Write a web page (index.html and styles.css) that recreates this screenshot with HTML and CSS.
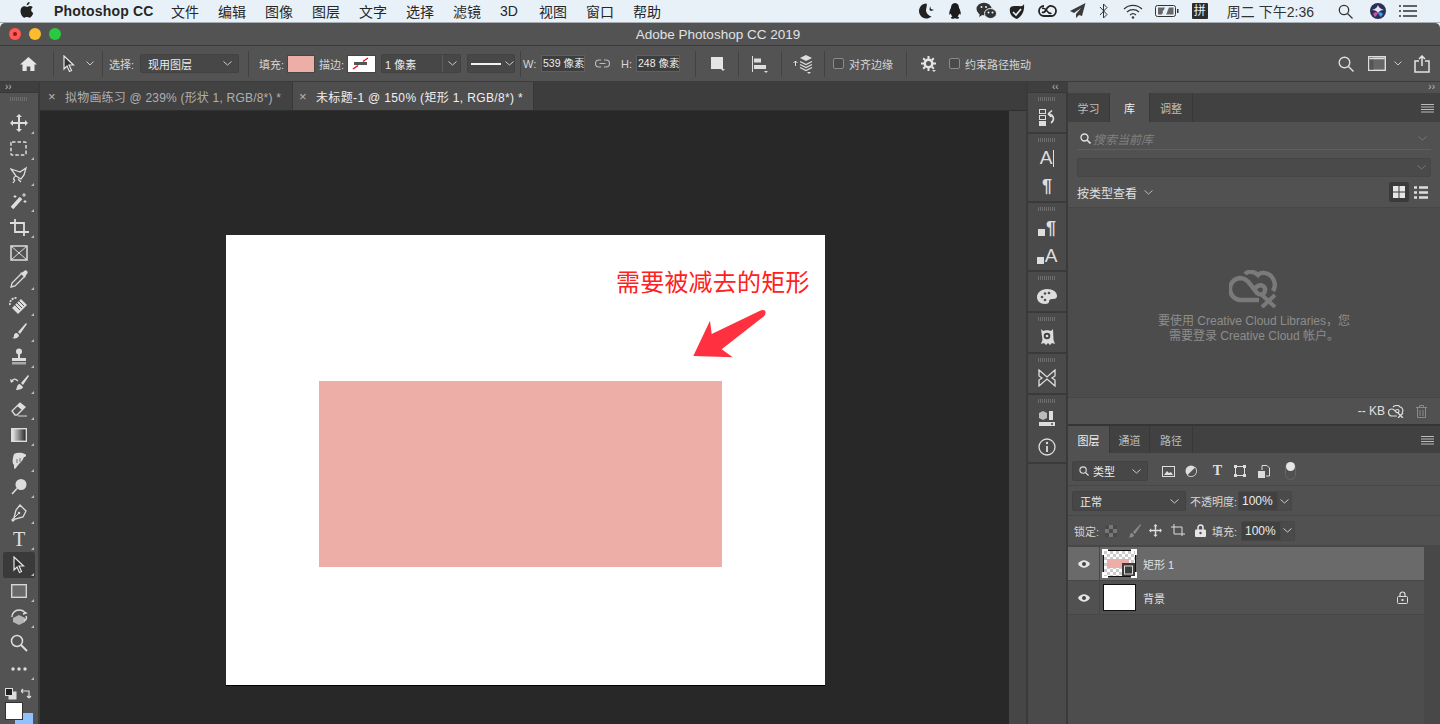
FILE: index.html
```html
<!DOCTYPE html>
<html lang="zh-CN">
<head>
    <meta charset="UTF-8">
    <title>Adobe Photoshop CC 2019</title>
    <link rel="stylesheet" href="styles.css">
</head>
<body>
    <svg class="defs" width="0" height="0">
        <defs>
            <linearGradient id="grad" x1="0" y1="0" x2="1" y2="0">
                <stop offset="0" stop-color="#f0f0f0"/>
                <stop offset="1" stop-color="#222"/>
            </linearGradient>
            <pattern id="check" width="6" height="6" patternUnits="userSpaceOnUse">
                <rect width="6" height="6" fill="#fff"/>
                <rect width="3" height="3" fill="#ccc"/>
                <rect x="3" y="3" width="3" height="3" fill="#ccc"/>
            </pattern>
        </defs>
    </svg>

    <div class="menubar">
        <svg class="apple" width="14" height="16" viewBox="0 0 14 16"><path d="M9.600 0c.1 1.700-1.200 3.200-2.900 3.200C6.600 1.600 8 .2 9.600 0zM12.800 5.300c-1 .6-1.600 1.500-1.600 2.700 0 1.400.8 2.400 2.100 2.900-.8 2.300-2.300 4.800-3.900 4.800-.9 0-1.400-.6-2.500-.6s-1.700.6-2.500.6C2.500 15.700.5 12 .5 9c0-3 1.900-4.800 3.800-4.800 1.100 0 2 .7 2.700.7.700 0 1.700-.8 3-.8 1.100 0 2.100.4 2.800 1.200z" fill="#222"/></svg>
        <span class="menu-app">Photoshop CC</span>
        <span class="menu-item">文件</span>
        <span class="menu-item">编辑</span>
        <span class="menu-item">图像</span>
        <span class="menu-item">图层</span>
        <span class="menu-item">文字</span>
        <span class="menu-item">选择</span>
        <span class="menu-item">滤镜</span>
        <span class="menu-item menu-3d">3D</span>
        <span class="menu-item">视图</span>
        <span class="menu-item">窗口</span>
        <span class="menu-item">帮助</span>
        <div class="status">
            <svg class="st st-moon" width="17" height="16" viewBox="0 0 17 16"><path d="M8.500 .5a7.500 7.500 0 1 0 5 13.100A8 8 0 0 1 8 8c0-3 1.500-6 .5-7.500z" fill="#222"/><path d="M12 3l1 3 3 1-3 1-1.500-1z" fill="#222"/></svg>
            <svg class="st st-qq" width="14" height="18" viewBox="0 0 14 18"><path d="M7 1c2.800 0 4 2.200 4 4.800 1.200 2.400 2.200 5 1.600 6.800-.5.200-1.100-.6-1.500-1.200-.2 1.200-.8 2.300-1.600 3 1 .4 1.600 1 1.600 1.500 0 .8-3 1-4.100.4-1.100.6-4.100.4-4.100-.4 0-.5.600-1.100 1.600-1.500-.8-.7-1.400-1.800-1.600-3-.4.600-1 1.400-1.500 1.200C.8 10.800 1.800 8.200 3 5.800 3 3.200 4.200 1 7 1z" fill="#1c1c1c"/></svg>
            <svg class="st st-wechat" width="21" height="18" viewBox="0 0 21 18"><ellipse cx="8" cy="7" rx="7.500" ry="6.300" fill="#333"/><path d="M4 11l-1 4 4-2.500z" fill="#333"/><ellipse cx="14.500" cy="11.500" rx="6" ry="5" fill="#333" stroke="#e8f1f8"/><circle cx="12.500" cy="10.500" r="1" fill="#e8f1f8"/><circle cx="16.500" cy="10.500" r="1" fill="#e8f1f8"/><circle cx="5.500" cy="5" r="1" fill="#e8f1f8"/><circle cx="10" cy="5" r="1" fill="#e8f1f8"/></svg>
            <svg class="st st-acorn" width="16" height="17" viewBox="0 0 16 17"><path d="M8 3c3 0 6 1 7-2 .5 5-.5 11-7 15C3 14 0 11 1 5c1-2 4-2 7-2z" fill="#222"/><path d="M4 9l3 3 5-6" stroke="#e8f1f8" stroke-width="1.600" fill="none"/></svg>
            <svg class="st st-cc" width="19" height="14" viewBox="0 0 19 14"><path d="M6 2a5 5 0 0 0 0 10h7a5 5 0 0 0 1-9.900C11 1 9 4 8 6c-1 2-2.500 3-4 2" fill="none" stroke="#222" stroke-width="1.800"/><path d="M4 4.500c2-1 3.500.5 5 2.500 1.500 2 3 3 4.500 2" fill="none" stroke="#222" stroke-width="1.500"/></svg>
            <svg class="st st-send" width="17" height="16" viewBox="0 0 17 16"><path d="M16.500 0L1 8l4 2 7-5-5 6v4l3-3 3 1z" fill="#3a3a3a"/></svg>
            <svg class="st st-bt" width="9" height="16" viewBox="0 0 9 16"><path d="M1 4l7 7.500L4.500 15V1L8 4.500 1 12" fill="none" stroke="#333" stroke-width="1"/></svg>
            <svg class="st st-wifi" width="20" height="15" viewBox="0 0 20 15"><path d="M1 5a13 13 0 0 1 18 0M4 8a9 9 0 0 1 12 0M7 11a4.500 4.500 0 0 1 6 0" fill="none" stroke="#333" stroke-width="1.200"/><circle cx="10" cy="13.500" r="1.200" fill="#333"/></svg>
            <svg class="st st-batt" width="24" height="12" viewBox="0 0 24 12"><rect x=".5" y=".5" width="20" height="11" rx="2" fill="none" stroke="#333"/><rect x="22" y="4" width="1.500" height="4" fill="#333"/><path d="M3 2.500h7l-3 7H3zM14 2.500h4.500v7H11z" fill="#666"/><path d="M12.500 1L8.500 6.500h3L9.500 11" fill="none" stroke="#e8f1f8" stroke-width="1.200"/></svg>
            <span class="st-ime">拼</span>
            <span class="st-clock">周二 下午2:36</span>
            <svg class="st st-find" width="15" height="15" viewBox="0 0 15 15"><circle cx="6" cy="6" r="4.700" fill="none" stroke="#333" stroke-width="1.300"/><path d="M9.500 9.500l5 5" stroke="#333" stroke-width="1.300"/></svg>
            <svg class="st st-siri" width="16" height="16" viewBox="0 0 16 16"><circle cx="8" cy="8" r="8" fill="#2b2f55"/><path d="M8 2c1 3 3 4 6 5-3 0-5 1-6 3C7 8 5 7 2 7c3-1 5-2 6-5z" fill="#e8e0f8"/><path d="M3 11c2-2 3-2 5-1-1 2-2 3-3 4z" fill="#d24fb4"/><path d="M13 11c-2-2-3-2-5-1 1 2 2 3 3 4z" fill="#3aa0e8"/></svg>
            <svg class="st st-list" width="18" height="12" viewBox="0 0 18 12"><path d="M0 1h2M0 6h2M0 11h2M4 1h14M4 6h14M4 11h14" stroke="#333" stroke-width="1.300"/></svg>
        </div>
    </div>

    <div class="window">
        <div class="titlebar">
            <div class="lights">
                <span class="light light-red"></span>
                <span class="light light-yellow"></span>
                <span class="light light-green"></span>
            </div>
            <span class="title">Adobe Photoshop CC 2019</span>
        </div>

        <div class="options">
            <div class="opt-home">
                <svg width="17" height="16" viewBox="0 0 17 16"><path d="M8.500 1L0 8.500h2.500V15h4.200v-4.500h3.600V15h4.200V8.500H17z" fill="#e6e6e6"/></svg>
            </div>
            <i class="sep"></i>
            <div class="opt-tool">
                <svg width="14" height="18" viewBox="0 0 14 18"><path d="M2 1v13l3-3 2.500 5.500 2-1L7 10h4.500z" fill="#333" stroke="#e6e6e6" stroke-width="1.200"/></svg>
                <svg class="opt-tool-chev" width="8" height="5" viewBox="0 0 8 5"><path d="M.5.500L4 4 7.500.5" fill="none" stroke="#ccc"/></svg>
            </div>
            <i class="sep"></i>
            <span class="lbl lbl-select">选择:</span>
            <div class="field field-layer"><span>现用图层</span><svg width="9" height="5" viewBox="0 0 9 5"><path d="M.5.500L4.500 4 8.500.5" fill="none" stroke="#ccc"/></svg></div>
            <i class="sep sep-paint"></i>
            <span class="lbl lbl-fill">填充:</span>
            <span class="swatch swatch-fill"></span>
            <span class="lbl lbl-stroke">描边:</span>
            <span class="swatch swatch-stroke">
                <svg width="25" height="15" viewBox="0 0 25 15"><path d="M6 7.500h13" stroke="#555" stroke-width="3"/><path d="M5 13l5-3.500M15 5.500L20 2" stroke="#e01020" stroke-width="1.500"/></svg>
            </span>
            <div class="field field-size"><span>1 像素</span><b class="field-split"></b><svg width="9" height="5" viewBox="0 0 9 5"><path d="M.5.500L4.500 4 8.500.5" fill="none" stroke="#ccc"/></svg></div>
            <div class="field field-line"><b class="line-sample"></b><svg width="9" height="5" viewBox="0 0 9 5"><path d="M.5.500L4.500 4 8.500.5" fill="none" stroke="#ccc"/></svg></div>
            <i class="sep sep-w"></i>
            <span class="lbl lbl-w">W:</span>
            <div class="num num-w">539 像素</div>
            <svg class="opt-link" width="15" height="9" viewBox="0 0 15 9"><path d="M6 1H4a3.500 3.500 0 0 0 0 7h2M9 1h2a3.500 3.500 0 0 1 0 7H9M4.500 4.500h6" fill="none" stroke="#bbb" stroke-width="1.100"/></svg>
            <span class="lbl lbl-h">H:</span>
            <div class="num num-h">248 像素</div>
            <i class="sep sep-rect"></i>
            <div class="opt-ico opt-rect"><svg width="13" height="13" viewBox="0 0 13 13"><rect width="12" height="12" fill="#e4e4e4"/></svg></div>
            <i class="sep"></i>
            <div class="opt-ico opt-align"><svg width="16" height="16" viewBox="0 0 16 16"><path d="M.5 0v16" stroke="#ddd"/><rect x="2" y="2.500" width="7" height="4" fill="#ddd"/><rect x="2" y="9" width="12" height="4" fill="#ddd"/></svg></div>
            <i class="sep"></i>
            <div class="opt-ico opt-stack"><svg width="20" height="18" viewBox="0 0 20 18"><path d="M2.500 11V6M.5 8l2-2 2 2" fill="none" stroke="#ddd"/><path d="M13 0l6 3-6 3-6-3z" fill="#ddd"/><path d="M7 6.500l6 3 6-3M7 9.500l6 3 6-3M7 12.500l6 3 6-3" fill="none" stroke="#ddd" stroke-width="1.300"/></svg></div>
            <i class="sep"></i>
            <span class="check check-a"></span>
            <span class="lbl lbl-check">对齐边缘</span>
            <i class="sep sep-gear"></i>
            <div class="opt-ico opt-gear"><svg width="15" height="15" viewBox="0 0 15 15"><circle cx="7.500" cy="7.500" r="3.800" fill="none" stroke="#e4e4e4" stroke-width="2.600"/><path d="M7.500 0v3M7.500 12v3M0 7.500h3M12 7.500h3M2.200 2.200l2 2M10.800 10.800l2 2M2.200 12.800l2-2M10.800 4.200l2-2" stroke="#e4e4e4" stroke-width="2"/></svg></div>
            <span class="check check-b"></span>
            <span class="lbl lbl-check">约束路径拖动</span>
            <div class="opt-right">
                <svg width="16" height="16" viewBox="0 0 16 16"><circle cx="6.500" cy="6.500" r="5.300" fill="none" stroke="#ddd" stroke-width="1.400"/><path d="M10.500 10.500l5 5" stroke="#ddd" stroke-width="1.500"/></svg>
                <svg class="opt-layout" width="18" height="15" viewBox="0 0 18 15"><rect x=".7" y=".7" width="16.600" height="13.600" fill="#666" stroke="#ddd" stroke-width="1.400"/><rect x="1.400" y="1.400" width="4" height="12.200" fill="#555"/><path d="M1.400 2.500h15.200" stroke="#ddd" stroke-width="1.500"/></svg>
                <svg class="opt-layout-chev" width="8" height="5" viewBox="0 0 8 5"><path d="M.5.500L4 4 7.500.5" fill="none" stroke="#ccc"/></svg>
                <svg class="opt-share" width="16" height="18" viewBox="0 0 16 18"><path d="M5 6H1v11h14V6h-4M8 11V1M5 4l3-3 3 3" fill="none" stroke="#e4e4e4" stroke-width="1.500"/></svg>
            </div>
        </div>

        <div class="workspace">
            <div class="toolbar">
                <div class="strip strip-left">››</div>
                <div class="grip"></div>
                <div class="tool corner"><svg width="18" height="18" viewBox="0 0 18 18"><path d="M9 0l3 3h-2v5h5V6l3 3-3 3v-2h-5v5h2l-3 3-3-3h2v-5H3v2L0 9l3-3v2h5V3H6z" fill="#ddd"/></svg></div>
                <div class="tool corner"><svg width="18" height="16" viewBox="0 0 18 16"><rect x="1" y="1" width="15" height="13" rx="1" fill="none" stroke="#ddd" stroke-width="1.500" stroke-dasharray="3.500 2"/></svg></div>
                <div class="tool corner"><svg width="18" height="18" viewBox="0 0 18 18"><path d="M1 3l6 2 3 1 6-4-2 7-3 4-5-3zM6 10c-3 1-3 4-1 4M5 14l-2 3M8 13l3 3" fill="none" stroke="#ddd" stroke-width="1.300"/></svg></div>
                <div class="tool corner"><svg width="18" height="18" viewBox="0 0 18 18"><path d="M2 16L11 6" stroke="#ddd" stroke-width="3.500"/><path d="M14 1v4M12 3h4M5 3v3M3.500 4.500h3M15 8v3M13.500 9.500h3" stroke="#ddd" stroke-width="1"/></svg></div>
                <div class="tool corner"><svg width="19" height="19" viewBox="0 0 19 19"><path d="M0 4h14v13M5 0v13h14" fill="none" stroke="#ddd" stroke-width="1.800" transform="translate(0 1)"/></svg></div>
                <div class="tool"><svg width="18" height="16" viewBox="0 0 18 16"><rect x="1" y="1" width="16" height="14" fill="none" stroke="#ddd" stroke-width="1.500"/><path d="M1 1l16 14M17 1L1 15" stroke="#ddd"/></svg></div>
                <div class="tool corner"><svg width="18" height="18" viewBox="0 0 18 18"><path d="M11 4L2 13l-1 4 4-1 9-9" fill="none" stroke="#ddd" stroke-width="1.300"/><path d="M10 3l5 5 1-3c2-2 2-3 1-4s-2-1-4 1z" fill="#ddd"/></svg></div>
                <div class="tool corner"><svg width="20" height="19" viewBox="0 0 20 19"><path d="M3 12l9-9 6 6-9 9z" fill="#ddd"/><path d="M8 7l5 5M10 5l5 5M6 9l5 5" stroke="#555"/><path d="M1 9a6 6 0 0 1 7-7" fill="none" stroke="#ddd" stroke-width="1.800" stroke-dasharray="2 1"/></svg></div>
                <div class="tool corner"><svg width="18" height="18" viewBox="0 0 18 18"><path d="M16 1L8 10l2 2 7-10z" fill="#ddd"/><path d="M7 11c-3 0-3 2-3 3s-1 2-2 2c3 1 7 0 7-3z" fill="#ddd"/></svg></div>
                <div class="tool corner"><svg width="18" height="18" viewBox="0 0 18 18"><circle cx="9" cy="3.500" r="3" fill="#ddd"/><path d="M8 6h2v4h6v3H2v-3h6z" fill="#ddd"/><rect x="2" y="14" width="14" height="2.500" fill="#aaa"/></svg></div>
                <div class="tool corner"><svg width="20" height="18" viewBox="0 0 20 18"><path d="M19 1L12 9l2 2 6-9zM11 10c-2 0-3 2-3 3l-1 3c3 0 7-1 7-3z" fill="#ddd"/><path d="M9 7C6 4 4 5 3 7" fill="none" stroke="#ddd" stroke-width="1.300"/><path d="M1 5l1 4 3-2z" fill="#ddd"/></svg></div>
                <div class="tool corner"><svg width="18" height="16" viewBox="0 0 18 16"><path d="M2 10l8-8 5 4-8 8H5z" fill="none" stroke="#ddd" stroke-width="1.300"/><path d="M7 5l3-3 5 4-3 3z" fill="#ddd"/><path d="M8 15h9" stroke="#ddd"/></svg></div>
                <div class="tool corner"><svg width="16" height="14" viewBox="0 0 16 14"><rect x=".7" y=".7" width="14.600" height="12.600" fill="url(#grad)" stroke="#ddd" stroke-width="1.400"/></svg></div>
                <div class="tool corner"><svg width="18" height="18" viewBox="0 0 18 18"><path d="M4 2c4-2 8-1 11 0 2 1 1 3-1 3-1 3-3 5-5 7l-4 5c-1 0-1-1-1-3 0-1 0-2-1-2-1-3 0-7 1-10z" fill="#ddd"/><path d="M7 7v4M10 6v4" stroke="#555" stroke-width=".8"/></svg></div>
                <div class="tool corner"><svg width="18" height="18" viewBox="0 0 18 18"><circle cx="11" cy="6.500" r="5.500" fill="#ddd"/><path d="M7 10.500L2 16" stroke="#ddd" stroke-width="1.600"/></svg></div>
                <div class="tool corner"><svg width="18" height="18" viewBox="0 0 18 18"><path d="M10 1l6 6-3 6-8 2-2 2-1-1 2-2 2-8z" fill="none" stroke="#ddd" stroke-width="1.300"/><path d="M4 14l4-4" stroke="#ddd"/><circle cx="9" cy="9" r="1.200" fill="#ddd"/></svg></div>
                <div class="tool corner"><span class="tool-t">T</span></div>
                <div class="tool tool-on corner"><svg width="14" height="18" viewBox="0 0 14 18"><path d="M2 1v13l3-3 2.500 5.500 2-1L7 10h4.500z" fill="#2e2e2e" stroke="#e6e6e6" stroke-width="1.200"/></svg></div>
                <div class="tool corner"><svg width="16" height="14" viewBox="0 0 16 14"><rect x=".7" y=".7" width="14.600" height="12.600" fill="#6a6a6a" stroke="#ddd" stroke-width="1.300"/></svg></div>
                <div class="tool corner"><svg width="18" height="18" viewBox="0 0 18 18"><path d="M3 10l6-3 6 3v4l-6 3-6-3z" fill="#b5b5b5"/><path d="M2 9c0-4 3-7 7-7 3 0 5 1 6 3M16 8c1 2 0 4-2 5M13 3l3 2-3 1" fill="none" stroke="#ddd" stroke-width="1.500"/></svg></div>
                <div class="tool"><svg width="18" height="18" viewBox="0 0 18 18"><circle cx="7" cy="7" r="5.500" fill="none" stroke="#ddd" stroke-width="1.500"/><path d="M11 11l6 6" stroke="#ddd" stroke-width="2"/></svg></div>
                <div class="tool corner"><svg width="16" height="4" viewBox="0 0 16 4"><circle cx="2" cy="2" r="1.700" fill="#ddd"/><circle cx="8" cy="2" r="1.700" fill="#ddd"/><circle cx="14" cy="2" r="1.700" fill="#ddd"/></svg></div>
                <div class="tool-mini">
                    <svg width="12" height="12" viewBox="0 0 12 12"><rect x="3.500" y="3.500" width="8" height="8" fill="#ddd"/><rect x=".5" y=".5" width="7" height="7" fill="#222" stroke="#ddd"/></svg>
                    <svg width="12" height="12" viewBox="0 0 12 12"><path d="M0 3h8v7M8 10l-2-2M8 10l2-2M0 3l2-2M0 3l2 2" fill="none" stroke="#ddd" stroke-width="1.200"/></svg>
                </div>
                <div class="colors">
                    <span class="color-bg"></span>
                    <span class="color-fg"></span>
                </div>
            </div>

            <div class="docs">
                <div class="tabs">
                    <div class="tab"><span class="tab-x">×</span>拟物画练习 @ 239% (形状 1, RGB/8*) *</div>
                    <div class="tab tab-on"><span class="tab-x">×</span>未标题-1 @ 150% (矩形 1, RGB/8*) *</div>
                </div>
                <div class="doc-row">
                    <div class="canvas">
                        <div class="paper">
                            <div class="shape"></div>
                            <span class="note">需要被减去的矩形</span>
                            <svg class="arrow" width="76" height="52" viewBox="0 0 76 52"><path d="M1.300 48L18 12.700 19.700 26 68 2.700c3-1.500 6-.5 5.500 2.300-.3 1.800-1 3-2.500 4L29.700 41.300l11 8z" fill="#ff3040"/></svg>
                        </div>
                    </div>
                    <div class="vscroll"></div>
                </div>
            </div>

            <div class="dock">
                <div class="strip strip-dock"></div>
                <div class="dock-group"><div class="grip"></div>
                    <div class="dock-ico"><svg width="18" height="18" viewBox="0 0 18 18"><rect x="1.500" y="1.500" width="6" height="4" fill="none" stroke="#ddd"/><rect x="1.500" y="7.500" width="6" height="4" fill="none" stroke="#ddd"/><rect x="1" y="13" width="7" height="5" fill="#ddd"/><path d="M13 15c4-3 3-8-2-9M10 6l4-3.500M10 6l3.500 3" fill="none" stroke="#ddd" stroke-width="1.600"/></svg></div>
                </div>
                <div class="dock-group"><div class="grip"></div>
                    <div class="dock-ico dock-text">A<i class="dock-cursor"></i></div>
                    <div class="dock-ico dock-text dock-para">¶</div>
                </div>
                <div class="dock-group"><div class="grip"></div>
                    <div class="dock-ico dock-text dock-style"><b class="style-box"></b><span class="dock-para">¶</span></div>
                    <div class="dock-ico dock-text dock-style"><b class="style-box"></b><span>A</span></div>
                </div>
                <div class="dock-group dock-one"><div class="grip"></div>
                    <div class="dock-ico"><svg width="20" height="15" viewBox="0 0 20 15"><path d="M10 0c6 0 10 3 10 7 0 3-3 3-5 3-2 0-3 1-3 3 0 1-2 2-4 2C3 15 0 12 0 8c0-4 4-8 10-8z" fill="#ddd"/><g fill="#505050"><circle cx="5" cy="8" r="1.300"/><circle cx="8" cy="4.500" r="1.300"/><circle cx="12" cy="4" r="1.300"/><circle cx="8" cy="11" r="1.300"/></g></svg></div>
                </div>
                <div class="dock-group dock-one"><div class="grip"></div>
                    <div class="dock-ico"><svg width="16" height="18" viewBox="0 0 16 18"><path d="M2 1l2 2c2-1 6-1 8 0l2-2 .5 11 1.500 4-3-1-2 2-2-2-2 2-2-2-3 1 1.500-4z" fill="#ddd"/><circle cx="8" cy="8" r="3.300" fill="#444"/><circle cx="8" cy="8" r="1.300" fill="#ddd"/></svg></div>
                </div>
                <div class="dock-group dock-one"><div class="grip"></div>
                    <div class="dock-ico"><svg width="18" height="18" viewBox="0 0 18 18"><path d="M1 1l8 7 8-7v6l-3 2 3 2v6l-8-7-8 7v-6l3-2-3-2z" fill="none" stroke="#ddd" stroke-width="1.300"/></svg></div>
                </div>
                <div class="dock-group"><div class="grip"></div>
                    <div class="dock-ico"><svg width="18" height="18" viewBox="0 0 18 18"><path d="M5 1l4 2v5l-4 2-4-2V3z" fill="#bbb"/><rect x="11" y="1" width="4" height="9" fill="#ddd"/><rect x="1" y="12" width="16" height="4" fill="#ddd"/><circle cx="14" cy="14" r="1" fill="#444"/></svg></div>
                    <div class="dock-ico"><svg width="18" height="18" viewBox="0 0 18 18"><circle cx="9" cy="9" r="8" fill="none" stroke="#ddd" stroke-width="1.300"/><path d="M9 8v6" stroke="#ddd" stroke-width="1.800"/><circle cx="9" cy="5" r="1.200" fill="#ddd"/></svg></div>
                </div>
            </div>

            <div class="panels">
                <div class="strip strip-panels">‹‹<span>››</span></div>
                <div class="ptabs">
                    <span class="ptab ptab-a">学习</span>
                    <span class="ptab ptab-on ptab-b">库</span>
                    <span class="ptab ptab-c">调整</span>
                    <svg class="pmenu" width="13" height="9" viewBox="0 0 13 9"><path d="M0 .5h13M0 3h13M0 5.500h13M0 8h13" stroke="#bbb"/></svg>
                </div>
                <div class="lib">
                    <div class="lib-search">
                        <svg width="11" height="11" viewBox="0 0 11 11"><circle cx="4.500" cy="4.500" r="3.500" fill="none" stroke="#e0e0e0" stroke-width="1.400"/><path d="M7 7l3.500 3.500" stroke="#e0e0e0" stroke-width="1.700"/></svg>
                        <span class="lib-placeholder">搜索当前库</span>
                        <svg class="lib-chev" width="9" height="5" viewBox="0 0 9 5"><path d="M.5.500L4.500 4 8.500.5" fill="none" stroke="#777"/></svg>
                    </div>
                    <div class="lib-drop"><svg class="lib-chev" width="9" height="5" viewBox="0 0 9 5"><path d="M.5.500L4.500 4 8.500.5" fill="none" stroke="#777"/></svg></div>
                    <div class="lib-view">
                        <span>按类型查看</span>
                        <svg class="lib-view-chev" width="9" height="5" viewBox="0 0 9 5"><path d="M.5.500L4.500 4 8.500.5" fill="none" stroke="#bbb"/></svg>
                        <span class="grid-btn"><svg width="12" height="12" viewBox="0 0 12 12"><path d="M0 0h5.500v5.500H0zM6.500 0H12v5.500H6.500zM0 6.500h5.500V12H0zM6.500 6.500H12V12H6.500z" fill="#e6e6e6"/></svg></span>
                        <svg class="list-btn" width="14" height="13" viewBox="0 0 14 13"><path d="M0 1.500h3M5 1.500h9M0 6.500h3M5 6.500h9M0 11.500h3M5 11.500h9" stroke="#ddd" stroke-width="2.400"/></svg>
                    </div>
                    <div class="lib-body">
                        <svg class="lib-cloud" width="50" height="38" viewBox="0 0 50 38"><path d="M30 30H13A11 11 0 0 1 11 8c3 0 7 2 10 6l7 9c2 2 5 2 7 0 2-3 1-6-1-7-3-2-6 0-9 3M16 4c3-3 9-3 13 1 3-3 9-3 13 1 4 4 5 10 2 15" fill="none" stroke="#7a7a7a" stroke-width="4.500"/><path d="M33 25l13 12M46 25L33 37" stroke="#7a7a7a" stroke-width="4"/></svg>
                        <p class="lib-msg">要使用 Creative Cloud Libraries，您<br>需要登录 Creative Cloud 帐户。</p>
                    </div>
                    <div class="lib-foot">
                        <span>-- KB</span>
                        <svg class="lib-foot-cloud" width="16" height="13" viewBox="0 0 16 13"><path d="M9 11H4a3.500 3.500 0 0 1 0-7c2 0 3 2 4 3s3 1 3-1-3-2-4 0M5 2c2-2 6-2 7 0 2 0 4 3 2 6" fill="none" stroke="#ddd" stroke-width="1.200"/><path d="M10 8l5 5M15 8l-5 5" stroke="#ddd" stroke-width="1.300"/></svg>
                        <svg class="lib-trash" width="11" height="13" viewBox="0 0 11 13"><path d="M0 2.500h11M3.500 2V.5h4V2M1.500 3v9.500h8V3M4 5v6M7 5v6" fill="none" stroke="#8a8a8a"/></svg>
                    </div>
                </div>
                <div class="ptabs ptabs-layers">
                    <span class="ptab ptab-on ptab-a">图层</span>
                    <span class="ptab ptab-b">通道</span>
                    <span class="ptab ptab-c">路径</span>
                    <svg class="pmenu" width="13" height="9" viewBox="0 0 13 9"><path d="M0 .5h13M0 3h13M0 5.500h13M0 8h13" stroke="#bbb"/></svg>
                </div>
                <div class="layers">
                    <div class="lrow lrow-filter">
                        <div class="field field-kind">
                            <svg width="10" height="10" viewBox="0 0 11 11"><circle cx="4.500" cy="4.500" r="3.500" fill="none" stroke="#ddd" stroke-width="1.200"/><path d="M7 7l3.500 3.500" stroke="#ddd" stroke-width="1.400"/></svg>
                            <span>类型</span>
                            <svg class="field-end" width="9" height="5" viewBox="0 0 9 5"><path d="M.5.500L4.500 4 8.500.5" fill="none" stroke="#ccc"/></svg>
                        </div>
                        <svg class="fi fi-img" width="13" height="11" viewBox="0 0 13 11"><rect x=".5" y=".5" width="12" height="10" fill="none" stroke="#ddd"/><path d="M2 9l3-4 2 2 2-1 2 3z" fill="#ddd"/></svg>
                        <svg class="fi fi-adj" width="12" height="12" viewBox="0 0 12 12"><circle cx="6" cy="6" r="5.500" fill="#ddd"/><path d="M10 2.200A5.500 5.500 0 0 1 2.200 10z" fill="#505050" stroke="#ddd" stroke-width=".8"/></svg>
                        <span class="fi fi-t">T</span>
                        <svg class="fi fi-shape" width="12" height="12" viewBox="0 0 12 12"><rect x="1.500" y="1.500" width="9" height="9" fill="none" stroke="#ddd"/><g fill="#ddd"><rect width="3" height="3"/><rect x="9" width="3" height="3"/><rect y="9" width="3" height="3"/><rect x="9" y="9" width="3" height="3"/></g></svg>
                        <svg class="fi fi-doc" width="12" height="13" viewBox="0 0 12 13"><path d="M4 5V.5h5L11.500 3v8H8" fill="none" stroke="#ddd"/><rect y="6" width="7" height="7" fill="#ddd"/></svg>
                        <span class="fi toggle"><b></b></span>
                    </div>
                    <div class="lrow lrow-blend">
                        <div class="field field-blend"><span>正常</span><svg class="field-end" width="9" height="5" viewBox="0 0 9 5"><path d="M.5.500L4.500 4 8.500.5" fill="none" stroke="#ccc"/></svg></div>
                        <span class="lbl lbl-op">不透明度:</span>
                        <div class="pct"><span>100%</span><b><svg width="9" height="5" viewBox="0 0 9 5"><path d="M.5.500L4.500 4 8.500.5" fill="none" stroke="#ccc"/></svg></b></div>
                    </div>
                    <div class="lrow lrow-lock">
                        <span class="lbl lbl-lock">锁定:</span>
                        <svg class="li li-check" width="12" height="12" viewBox="0 0 12 12"><rect width="12" height="12" fill="#777"/><path d="M0 0h4v4H0zM8 0h4v4H8zM4 4h4v4H4zM0 8h4v4H0zM8 8h4v4H8z" fill="#4a4a4a"/></svg>
                        <svg class="li li-brush" width="13" height="14" viewBox="0 0 13 14"><path d="M12.500 0L5 8l2 2 6-9zM4 9c-2 0-2 2-2 3 0 .500-1 1-2 1 3 1 6 0 6-2z" fill="#8a8a8a"/></svg>
                        <svg class="li li-move" width="13" height="13" viewBox="0 0 18 18"><path d="M9 0l3 3h-2v5h5V6l3 3-3 3v-2h-5v5h2l-3 3-3-3h2v-5H3v2L0 9l3-3v2h5V3H6z" fill="#ddd"/></svg>
                        <svg class="li li-crop" width="14" height="13" viewBox="0 0 14 13"><path d="M0 3h11v9M3 0v10h11" fill="none" stroke="#ddd"/></svg>
                        <svg class="li li-lock" width="11" height="13" viewBox="0 0 11 13"><path d="M3 6V3.500a2.500 2.500 0 0 1 5 0V6" fill="none" stroke="#e6e6e6" stroke-width="1.500"/><rect y="5.500" width="11" height="7.500" rx="1" fill="#e6e6e6"/><circle cx="5.500" cy="9" r="1.200" fill="#505050"/></svg>
                        <span class="lbl lbl-fillpct">填充:</span>
                        <div class="pct"><span>100%</span><b><svg width="9" height="5" viewBox="0 0 9 5"><path d="M.5.500L4.500 4 8.500.5" fill="none" stroke="#ccc"/></svg></b></div>
                    </div>
                    <div class="llist-wrap">
                        <div class="llist">
                            <div class="layer layer-on">
                                <span class="eye-cell"><svg width="12" height="8" viewBox="0 0 12 8"><path d="M0 4c3-5 9-5 12 0-3 5-9 5-12 0z" fill="#e6e6e6"/><circle cx="6" cy="4" r="2" fill="#444"/></svg></span>
                                <div class="thumb thumb-shape">
                                    <svg width="31" height="25" viewBox="0 0 31 25"><rect width="31" height="25" fill="url(#check)"/><rect x="3" y="8" width="22" height="9" fill="#eeaea8"/><rect x="18" y="12" width="13" height="13" fill="#3c3c3c"/><rect x="20.500" y="15" width="8" height="8" fill="none" stroke="#ddd"/></svg>
                                    <i class="mark mark-tl"></i><i class="mark mark-tr"></i><i class="mark mark-bl"></i><i class="mark mark-br"></i>
                                </div>
                                <span class="lname">矩形 1</span>
                            </div>
                            <div class="layer">
                                <span class="eye-cell"><svg width="12" height="8" viewBox="0 0 12 8"><path d="M0 4c3-5 9-5 12 0-3 5-9 5-12 0z" fill="#e6e6e6"/><circle cx="6" cy="4" r="2" fill="#444"/></svg></span>
                                <div class="thumb thumb-bg"></div>
                                <span class="lname">背景</span>
                                <svg class="lname-lock" width="11" height="13" viewBox="0 0 11 13"><path d="M3 6V3.500a2.500 2.500 0 0 1 5 0V6" fill="none" stroke="#ddd" stroke-width="1.200"/><rect x=".5" y="5.500" width="10" height="7" rx="1" fill="none" stroke="#ddd"/><rect x="4.500" y="8" width="2" height="2" fill="#ddd"/></svg>
                            </div>
                        </div>
                    </div>
                </div>
            </div>
        </div>
    </div>
</body>
</html>
```

FILE: styles.css
```css
* {
    box-sizing: border-box;
}
html, body {
    margin: 0;
    padding: 0;
    height: 724px;
    overflow: hidden;
}
body {
    display: flex;
    flex-direction: column;
    background: #e8f1f8;
    font-family: "Liberation Sans", "Noto Sans CJK SC", sans-serif;
    font-size: 11px;
    color: #dcdcdc;
}
i, b {
    display: block;
    font-style: normal;
}
.defs {
    position: absolute;
}

/* mac menu bar */
.menubar {
    flex: 0 0 23px;
    display: flex;
    align-items: center;
    background: #e8f1f8;
    border-bottom: 1px solid #a9afb4;
    color: #262626;
    font-size: 14px;
}
.apple {
    margin: 0 0 2px 20px;
}
.menu-app {
    margin-left: 20px;
    font-weight: bold;
    width: 117px;
    letter-spacing: .2px;
}
.menu-item {
    margin-right: 19px;
}
.menu-3d {
    margin-right: 21px;
}
.status {
    margin-left: auto;
    display: flex;
    align-items: center;
    padding-right: 23px;
}
.st-qq { margin-left: 13px; }
.st-wechat { margin-left: 14px; }
.st-acorn { margin-left: 12px; }
.st-cc { margin-left: 13px; }
.st-send { margin-left: 12px; }
.st-bt { margin-left: 13px; }
.st-wifi { margin-left: 15px; }
.st-batt { margin-left: 12px; }
.st-ime {
    margin-left: 13px;
    width: 16px;
    height: 16px;
    background: #2c2c2c;
    color: #e8f1f8;
    font-size: 12px;
    line-height: 16px;
    text-align: center;
    border-radius: 1px;
}
.st-clock {
    margin-left: 19px;
    color: #333;
    font-size: 14px;
}
.st-find { margin-left: 24px; }
.st-siri { margin-left: 17px; }
.st-list { margin-left: 13px; }

/* window */
.window {
    flex: 1;
    display: flex;
    flex-direction: column;
    min-height: 0;
    border-radius: 5px 5px 0 0;
    background: #535353;
    overflow: hidden;
}
.titlebar {
    flex: 0 0 23px;
    display: flex;
    align-items: center;
    justify-content: center;
    position: relative;
    border-bottom: 1px solid #3b3b3b;
    padding: 1px 4px 0 0;
}
.lights {
    position: absolute;
    left: 9px;
    top: 5px;
    display: flex;
    gap: 8px;
}
.light {
    width: 12px;
    height: 12px;
    border-radius: 50%;
}
.light-red { background: #fc5b57; box-shadow: inset 0 0 0 4px #fc5b57, inset 0 0 0 6px #8c1a17; }
.light-yellow { background: #fdbb2e; }
.light-green { background: #2ac940; }
.title {
    font-size: 13.500px;
    color: #e2e2e2;
}

/* options bar */
.options {
    flex: 0 0 36px;
    display: flex;
    align-items: center;
    border-bottom: 1px solid #3b3b3b;
    background: #535353;
}
.sep {
    width: 1px;
    height: 26px;
    background: #424242;
    flex: none;
}
.opt-home {
    width: 53px;
    display: flex;
    justify-content: center;
    padding-left: 3px;
}
.opt-tool {
    width: 48px;
    display: flex;
    align-items: center;
    padding-left: 8px;
}
.opt-tool-chev {
    margin-left: 10px;
}
.lbl {
    flex: none;
    white-space: nowrap;
    color: #d6d6d6;
    font-size: 11px;
}
.lbl-select { margin-left: 6px; width: 31px; }
.field {
    flex: none;
    display: flex;
    align-items: center;
    height: 19px;
    background: #474747;
    border: 1px solid #424242;
    border-radius: 2px;
    color: #ececec;
    font-size: 11px;
}
.field-layer {
    width: 99px;
    padding: 0 6px 0 7px;
    justify-content: space-between;
}
.sep-paint { margin-left: 9px; }
.lbl-fill { margin-left: 10px; width: 29px; }
.swatch {
    flex: none;
    width: 26px;
    height: 16px;
    display: block;
    box-shadow: 0 0 0 1px #464646;
}
.swatch-fill { background: #eeaea8; }
.lbl-stroke { margin-left: 5px; width: 29px; }
.swatch-stroke {
    width: 27px;
    background: #fff;
}
.swatch-stroke svg {
    display: block;
}
.field-size {
    margin-left: 6px;
    width: 80px;
    padding-left: 3px;
}
.field-size span {
    flex: 1;
}
.field-split {
    width: 1px;
    height: 17px;
    background: #5c5c5c;
    margin-right: 5px;
}
.field-size svg {
    margin-right: 3px;
}
.field-line {
    margin-left: 6px;
    width: 48px;
    padding-left: 3px;
    gap: 4px;
}
.line-sample {
    width: 30px;
    height: 2px;
    background: #f2f2f2;
}
.sep-w { margin-left: 5px; }
.lbl-w { margin-left: 2px; width: 18px; }
.num {
    flex: none;
    width: 44px;
    height: 17px;
    background: #3e3e3e;
    border: 1px solid #5f5f5f;
    color: #ececec;
    font-size: 10.500px;
    line-height: 15px;
    padding-left: 1px;
    white-space: nowrap;
}
.opt-link { margin-left: 10px; flex: none; }
.lbl-h { margin-left: 11px; width: 15px; }
.sep-rect { margin-left: 15px; }
.opt-ico {
    flex: none;
    width: 42px;
    display: flex;
    justify-content: center;
    position: relative;
}
.opt-ico::after {
    content: "";
    position: absolute;
    right: 13px;
    bottom: -1px;
    border-left: 2px solid transparent;
    border-right: 2px solid transparent;
    border-top: 2px solid #ddd;
}
.check {
    flex: none;
    width: 11px;
    height: 11px;
    border: 1px solid #8a8a8a;
    border-radius: 2px;
    background: #4a4a4a;
}
.check-a { margin-left: 8px; }
.lbl-check { margin-left: 5px; }
.sep-gear { margin-left: 13px; }
.opt-right {
    margin-left: auto;
    display: flex;
    align-items: center;
    padding-right: 10px;
}
.opt-layout { margin-left: 14px; }
.opt-layout-chev { margin-left: 8px; }
.opt-share { margin-left: 12px; }

/* main area */
.workspace {
    flex: 1;
    display: flex;
    min-height: 0;
    background: #3a3a3a;
}
.strip {
    height: 11px;
    background: #3f3f3f;
    border-bottom: 1px solid #383838;
    color: #bdbdbd;
    font-size: 10px;
    line-height: 10px;
    flex: none;
}
.strip-left {
    padding-left: 5px;
}
.grip {
    height: 10px;
    background: repeating-linear-gradient(90deg, #6e6e6e 0 1px, transparent 1px 2px) center 4px / 18px 4px no-repeat;
}
.toolbar {
    flex: 0 0 38px;
    background: #535353;
    display: flex;
    flex-direction: column;
}
.tool {
    flex: 0 0 26px;
    display: flex;
    align-items: center;
    justify-content: center;
    position: relative;
    margin: 0 3px 0 3px;
}
.corner::after {
    content: "";
    position: absolute;
    right: 1px;
    bottom: 2px;
    border-left: 3px solid transparent;
    border-bottom: 3px solid #bdbdbd;
}
.toolbar .grip {
    height: 17px;
}
.tool-on {
    background: #3a3a3a;
    border-radius: 2px;
}
.tool-t {
    font-family: "Liberation Serif", serif;
    font-size: 20px;
    line-height: 20px;
    color: #e2e2e2;
}
.tool-mini {
    flex: none;
    display: flex;
    justify-content: space-between;
    padding: 6px 5px 0 5px;
    height: 20px;
}
.colors {
    position: relative;
    flex: 1;
}
.color-fg {
    position: absolute;
    left: 5px;
    top: 0;
    width: 18px;
    height: 18px;
    background: #fff;
    border: 1px solid #333;
}
.color-bg {
    position: absolute;
    left: 15px;
    top: 11px;
    width: 18px;
    height: 18px;
    background: #8fc2ff;
}

/* documents */
.docs {
    flex: 1;
    min-width: 0;
    display: flex;
    flex-direction: column;
    border-left: 2px solid #3a3a3a;
    border-right: 2px solid #3a3a3a;
}
.tabs {
    flex: 0 0 29px;
    display: flex;
    background: #3d3d3d;
    border-bottom: 1px solid #303030;
}
.tab {
    width: 253px;
    display: flex;
    align-items: center;
    white-space: nowrap;
    background: #424242;
    border-right: 1px solid #383838;
    color: #b0b0b0;
    font-size: 12px;
    letter-spacing: .2px;
    padding-left: 8px;
}
.tab-on {
    width: 241px;
    background: #4e4e4e;
    color: #f0f0f0;
    padding-left: 6px;
    letter-spacing: .35px;
}
.tab-x {
    width: 17px;
    color: #b5b5b5;
    font-size: 13px;
}
.doc-row {
    flex: 1;
    display: flex;
    min-height: 0;
}
.canvas {
    flex: 1;
    background: #282828;
    padding: 124px 0 0 186px;
}
.vscroll {
    flex: 0 0 17px;
    background: #464646;
}
.paper {
    position: relative;
    width: 599px;
    height: 450px;
    background: #fff;
    padding: 146px 0 0 93px;
    box-shadow: 0 1px 0 #000;
}
.shape {
    width: 403px;
    height: 186px;
    background: #eeaea8;
}
.note {
    position: absolute;
    left: 390px;
    top: 30px;
    color: #ff2020;
    font-size: 24px;
    line-height: 36px;
    letter-spacing: .2px;
    white-space: nowrap;
}
.arrow {
    position: absolute;
    left: 466px;
    top: 73px;
}

/* icon dock */
.dock {
    flex: 0 0 40px;
    background: #4a4a4a;
    border-right: 2px solid #3a3a3a;
    display: flex;
    flex-direction: column;
}
.strip-dock {
    margin-right: -2px;
}
.dock-group {
    border-bottom: 2px solid #3a3a3a;
    flex: none;
    padding-bottom: 1px;
}
.dock-ico {
    height: 28px;
    display: flex;
    align-items: center;
    justify-content: center;
    position: relative;
}
.dock-text {
    font-size: 19px;
    color: #dedede;
}
.dock-cursor {
    width: 1px;
    height: 17px;
    background: #dedede;
    margin-left: 1px;
}
.dock-para {
    font-size: 18px;
    font-weight: bold;
}
.dock-style {
    align-items: flex-end;
    padding-bottom: 2px;
}
.style-box {
    width: 7px;
    height: 7px;
    background: #ddd;
    margin-right: 1px;
    margin-bottom: 3px;
}

/* right panels */
.panels {
    flex: 0 0 372px;
    display: flex;
    flex-direction: column;
    background: #515151;
}
.strip-panels {
    display: flex;
    justify-content: space-between;
    padding: 0 5px 0 0;
    margin-left: -16px;
    background: transparent;
    border: 0;
}
.ptabs {
    flex: 0 0 29px;
    display: flex;
    align-items: stretch;
    background: #414141;
    position: relative;
}
.ptab {
    display: flex;
    align-items: center;
    justify-content: center;
    color: #bdbdbd;
    font-size: 11px;
    border-right: 1px solid #383838;
}
.ptab-a { width: 42px; }
.ptab-b { width: 40px; }
.ptab-c { width: 43px; }
.ptab-on {
    background: #515151;
    color: #f0f0f0;
}
.pmenu {
    position: absolute;
    right: 6px;
    top: 11px;
}
.lib {
    flex: 0 0 302px;
    display: flex;
    flex-direction: column;
}
.lib-search {
    height: 28px;
    margin: 0 9px;
    display: flex;
    align-items: center;
    border-bottom: 1px solid #5f5f5f;
    position: relative;
    padding: 5px 0 0 3px;
}
.lib-placeholder {
    margin-left: 2px;
    font-style: italic;
    color: #808080;
    font-size: 12px;
}
.lib-chev {
    margin-left: auto;
    margin-right: 4px;
}
.lib-drop {
    height: 19px;
    margin: 8px 9px 0;
    display: flex;
    align-items: center;
    background: #4a4a4a;
    border: 1px solid #464646;
    border-radius: 2px;
}
.lib-view {
    height: 31px;
    display: flex;
    align-items: center;
    padding: 0 12px 0 9px;
    color: #e0e0e0;
    font-size: 12px;
    border-bottom: 1px solid #474747;
}
.lib-view-chev {
    margin-left: 7px;
}
.grid-btn {
    margin-left: auto;
    width: 20px;
    height: 20px;
    display: flex;
    align-items: center;
    justify-content: center;
    background: #3a3a3a;
    border-radius: 2px;
}
.list-btn {
    margin-left: 5px;
}
.lib-body {
    flex: 1;
    background: #4c4c4c;
    display: flex;
    flex-direction: column;
    align-items: center;
    padding-top: 62px;
    border-bottom: 1px solid #474747;
}
.lib-msg {
    margin: 6px 0 0;
    text-align: center;
    font-size: 12px;
    line-height: 15px;
    color: #8c8c8c;
}
.lib-foot {
    height: 26px;
    display: flex;
    align-items: center;
    justify-content: flex-end;
    padding: 0 13px 0 0;
    color: #e0e0e0;
    font-size: 12px;
}
.lib-foot-cloud { margin-left: 3px; }
.lib-trash { margin-left: 12px; }
.ptabs-layers {
    flex: 0 0 29px;
    border-top: 2px solid #353535;
}
.ptabs-layers .pmenu {
    top: 10px;
}
.layers {
    flex: 1;
    display: flex;
    flex-direction: column;
    min-height: 0;
}
.lrow {
    display: flex;
    align-items: center;
    flex: none;
    padding-left: 4px;
    border-bottom: 1px solid #474747;
}
.lrow-filter { height: 33px; padding-top: 4px; }
.lrow-blend { height: 30px; padding-top: 1px; }
.lrow-lock { height: 30px; padding-left: 6px; }
.field-kind {
    width: 76px;
    height: 20px;
    padding: 0 6px;
    gap: 4px;
}
.field-end {
    margin-left: auto;
}
.fi {
    flex: none;
}
.fi-img { margin-left: 14px; }
.fi-adj { margin-left: 10px; }
.fi-t {
    margin-left: 14px;
    width: 13px;
    font-family: "Liberation Serif", serif;
    font-size: 14px;
    font-weight: bold;
    color: #e0e0e0;
    text-align: center;
}
.fi-shape { margin-left: 10px; }
.fi-doc { margin-left: 12px; }
.toggle {
    margin-left: 15px;
    width: 11px;
    height: 18px;
    border: 1px solid #666;
    border-radius: 6px;
    position: relative;
}
.toggle b {
    width: 9px;
    height: 9px;
    border-radius: 50%;
    background: #e6e6e6;
    margin-top: -1px;
}
.field-blend {
    width: 114px;
    height: 20px;
    padding: 0 6px 0 7px;
    font-size: 11px;
}
.lbl-op { margin-left: 4px; width: 48px; }
.lbl-lock { width: 26px; }
.pct {
    flex: none;
    display: flex;
    width: 54px;
    height: 20px;
    border: 1px solid #474747;
    border-radius: 2px;
    background: #414141;
    color: #ececec;
    font-size: 12px;
}
.pct span {
    width: 38px;
    line-height: 18px;
    padding-left: 3px;
}
.pct b {
    flex: 1;
    background: #4a4a4a;
    display: flex;
    align-items: center;
    justify-content: center;
    border-left: 1px solid #474747;
}
.li { flex: none; }
.li-check { margin-left: 5px; }
.li-brush { margin-left: 11px; }
.li-move { margin-left: 8px; }
.li-crop { margin-left: 9px; }
.li-lock { margin-left: 10px; }
.lbl-fillpct { margin-left: 6px; width: 29px; }
.llist-wrap {
    flex: 1;
    background: #484848;
    padding-right: 16px;
    padding-top: 1px;
}
.llist {
    height: 100%;
    background: #4d4d4d;
}
.layer {
    height: 34px;
    display: flex;
    align-items: center;
    background: #515151;
    border-bottom: 1px solid #474747;
    position: relative;
}
.layer-on {
    background: #6a6a6a;
}
.eye-cell {
    width: 32px;
    height: 33px;
    display: flex;
    align-items: center;
    justify-content: center;
    border-right: 1px solid #474747;
    flex: none;
}
.thumb {
    flex: none;
    width: 31px;
    height: 25px;
    margin-left: 4px;
    position: relative;
    box-shadow: 0 0 0 1px #111;
}
.thumb svg {
    display: block;
}
.thumb-bg {
    background: #fff;
}
.mark {
    position: absolute;
    width: 6px;
    height: 6px;
    border: 0 solid #fff;
}
.mark-tl { left: -2px; top: -2px; border-width: 2px 0 0 2px; }
.mark-tr { right: -2px; top: -2px; border-width: 2px 2px 0 0; }
.mark-bl { left: -2px; bottom: -2px; border-width: 0 0 2px 2px; }
.mark-br { right: -2px; bottom: -2px; border-width: 0 2px 2px 0; }
.lname {
    margin-left: 8px;
    color: #e2e2e2;
    font-size: 11px;
}
.lname-lock {
    margin-left: auto;
    margin-right: 16px;
}
```
